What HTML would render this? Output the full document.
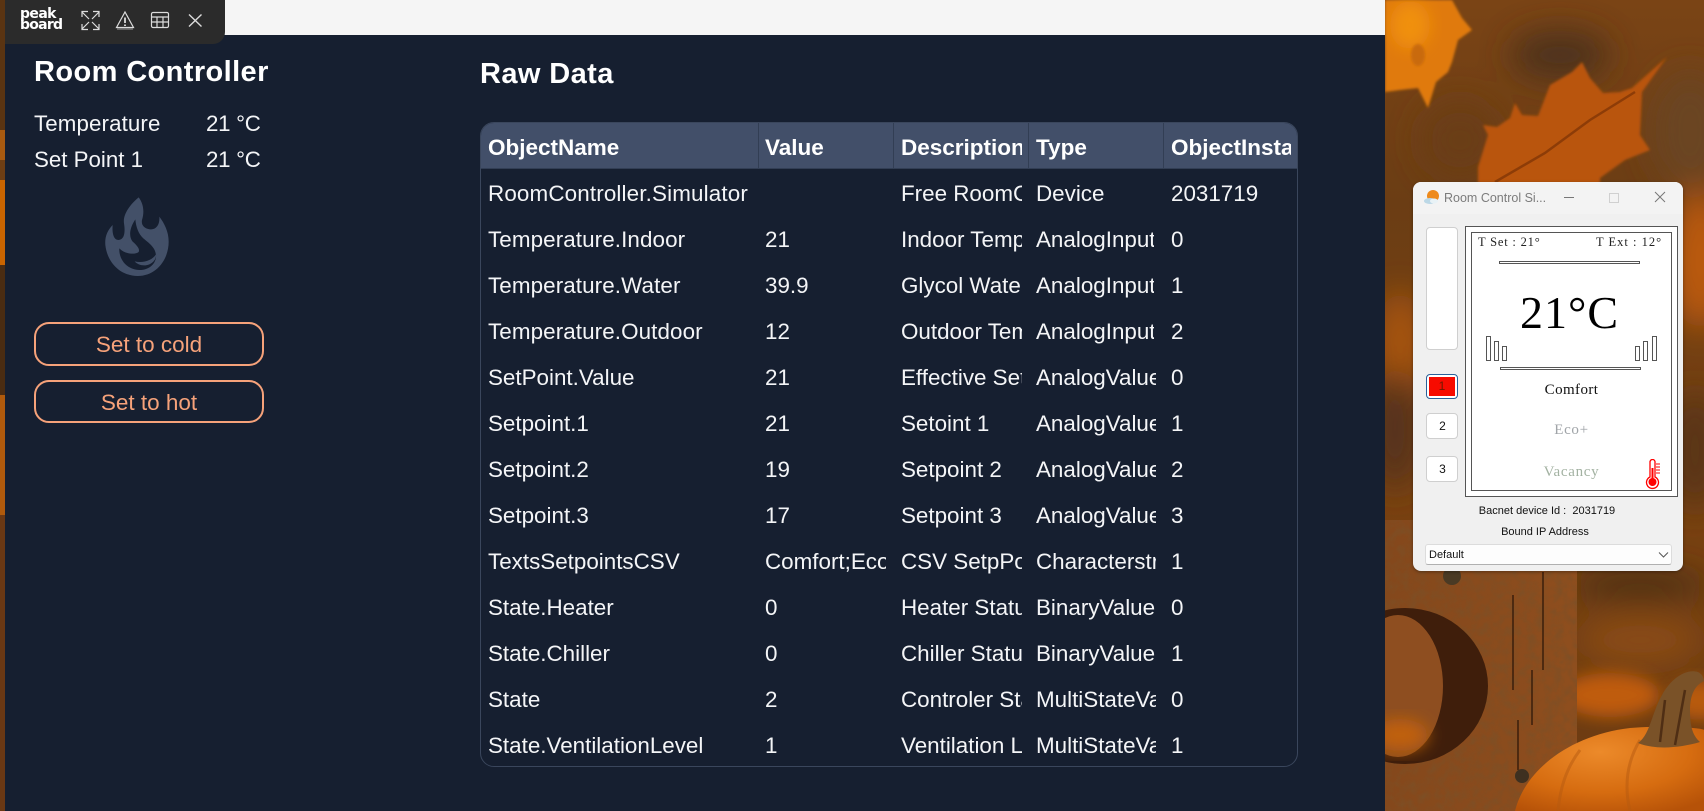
<!DOCTYPE html>
<html><head><meta charset="utf-8">
<style>
html,body{margin:0;padding:0;width:1704px;height:811px;overflow:hidden;background:#7a4312}
body{position:relative;font-family:"Liberation Sans",sans-serif}
.a{position:absolute;white-space:nowrap}
#app{position:absolute;left:5px;top:0;width:1380px;height:811px;background:#161f30;overflow:hidden}
#strip{position:absolute;left:0;top:0;width:1380px;height:35px;background:#f5f5f5}
#bar{position:absolute;left:0;top:0;width:220px;height:44px;background:#2b2b2b;border-radius:0 0 12px 0}
.t{color:#f4f5f7;position:absolute;white-space:nowrap;font-size:22.3px;line-height:30px}
.h1{color:#fff;position:absolute;white-space:nowrap;font-weight:bold;line-height:34px}
.btn{position:absolute;left:29px;width:226px;border:2px solid #f6a27a;border-radius:15px;color:#f6a27a;font-size:22.5px;text-align:center}
#tbl{position:absolute;left:475px;top:122px;width:818px;height:645px;border:1px solid #3a465c;border-radius:14px;overflow:hidden;box-sizing:border-box}
#head{position:absolute;left:0;top:0;width:100%;height:46px;background:#424f69;border-bottom:1px solid #323e54;box-sizing:border-box}
.d{position:absolute;top:0;width:1px;height:46px;background:#323e54}
.c{position:absolute;height:46px;line-height:46px;color:#f4f5f7;font-size:22.4px;white-space:nowrap;overflow:hidden}
.b{font-weight:bold;font-size:22.5px;color:#fff;line-height:50px}
.s{font-family:"Liberation Serif",serif;position:absolute;white-space:nowrap}
.w{font-family:"Liberation Sans",sans-serif;position:absolute;white-space:nowrap;color:#111}
.k{position:absolute;background:#fff;border:1px solid #cfcfcf;border-radius:4px;box-sizing:border-box;text-align:center;font-size:12px;color:#111}
.l{position:absolute;border:1px solid #555;box-sizing:border-box;background:#fff}
</style></head><body>

<svg class="a" style="left:0;top:0" width="1704" height="811" viewBox="0 0 1704 811">
<defs>
<filter id="b8" x="-30%" y="-30%" width="160%" height="160%"><feGaussianBlur stdDeviation="8"/></filter>
<filter id="b16" x="-40%" y="-40%" width="180%" height="180%"><feGaussianBlur stdDeviation="16"/></filter>
<filter id="b2"><feGaussianBlur stdDeviation="1.2"/></filter>
<filter id="wood" x="0" y="0" width="100%" height="100%">
<feTurbulence type="fractalNoise" baseFrequency="0.11" numOctaves="3" seed="4"/>
<feColorMatrix values="0 0 0 0 .2  0 0 0 0 .08  0 0 0 0 .02  2 0 0 0 -0.75"/>
</filter>
<linearGradient id="bgg" x1="0" y1="0" x2="0" y2="1">
<stop offset="0" stop-color="#7a4415"/><stop offset=".25" stop-color="#6b3d14"/><stop offset=".6" stop-color="#7a4210"/><stop offset="1" stop-color="#6a3a12"/></linearGradient>
<radialGradient id="pk" cx=".45" cy=".3" r=".8"><stop offset="0" stop-color="#ec8a2a"/><stop offset=".6" stop-color="#d66c10"/><stop offset="1" stop-color="#b65208"/></radialGradient>
<linearGradient id="wd" x1="0" y1="0" x2="1" y2="0"><stop offset="0" stop-color="#84481c"/><stop offset="1" stop-color="#8e4e1e"/></linearGradient>
</defs>
<rect width="1704" height="811" fill="url(#bgg)"/>
<rect x="0" y="0" width="5" height="130" fill="#5a3412"/><rect x="0" y="130" width="5" height="30" fill="#a85a10"/><rect x="0" y="180" width="5" height="85" fill="#c96400"/><rect x="0" y="265" width="5" height="130" fill="#4a2c12"/><rect x="0" y="395" width="5" height="120" fill="#b05a0c"/><rect x="0" y="515" width="5" height="296" fill="#6a3814"/>
<g filter="url(#b16)">
<ellipse cx="1560" cy="55" rx="50" ry="25" fill="#4e321a"/>
<ellipse cx="1690" cy="130" rx="40" ry="60" fill="#6b4520"/>
<ellipse cx="1460" cy="140" rx="40" ry="40" fill="#6a3c12"/>
<ellipse cx="1700" cy="260" rx="30" ry="70" fill="#bc5a10"/>
<ellipse cx="1400" cy="350" rx="25" ry="60" fill="#a85410"/>
<ellipse cx="1395" cy="430" rx="25" ry="60" fill="#54331a"/>
<ellipse cx="1695" cy="450" rx="30" ry="60" fill="#5a3618"/>
<ellipse cx="1640" cy="640" rx="60" ry="24" fill="#8a4b18"/>
<ellipse cx="1640" cy="585" rx="70" ry="14" fill="#4a2e16"/>
</g>
<ellipse cx="1610" cy="695" rx="50" ry="22" fill="#bf5c0c" filter="url(#b8)"/>
<ellipse cx="1700" cy="700" rx="30" ry="20" fill="#b85a0c" filter="url(#b8)"/>
<!-- top left leaf -->
<path d="M1385 0H1452L1462 18L1472 30L1458 40L1452 62L1448 72L1436 82L1428 108L1418 88L1400 90L1385 92Z" fill="#e07a0c" filter="url(#b2)"/>
<ellipse cx="1410" cy="25" rx="20" ry="24" fill="#f0900e" filter="url(#b8)"/>
<ellipse cx="1418" cy="55" rx="7" ry="11" fill="#c96a08" filter="url(#b2)"/>
<!-- main leaf -->
<path d="M1667 57L1652 78L1642 92L1640 135L1650 150L1625 160L1600 178L1600 200H1478L1478 167L1488 135L1483 125L1497 127L1510 118L1515 103L1522 115L1538 116L1550 85L1572 72L1582 62L1590 78L1603 93L1620 92L1632 88L1650 72Z" fill="#b9540a" filter="url(#b2)"/>
<path d="M1495 182L1545 153L1590 120L1635 92" stroke="#7a3206" stroke-width="2.5" fill="none" opacity=".7"/>
<!-- post -->
<rect x="1385" y="520" width="192" height="291" fill="url(#wd)"/>
<rect x="1385" y="520" width="192" height="291" filter="url(#wood)" opacity=".8"/>
<path d="M1513 595V690M1543 572V670M1532 670V725M1518 720L1518 770" stroke="#2c1608" stroke-width="1.8" fill="none" opacity=".7"/>
<circle cx="1452" cy="576" r="9" fill="#4a3a24"/><circle cx="1522" cy="776" r="7" fill="#3e3020"/>
<ellipse cx="1405" cy="686" rx="83" ry="78" fill="#3f1e0b"/>
<ellipse cx="1398" cy="686" rx="45" ry="71" fill="#8e4e20"/>
<ellipse cx="1400" cy="735" rx="28" ry="16" fill="#c0600e" filter="url(#b8)"/>
<!-- pumpkin -->
<path d="M1515 811C1525 770 1570 735 1630 728C1665 725 1704 728 1704 730V811Z" fill="url(#pk)"/>
<path d="M1640 740C1625 765 1625 790 1630 811M1580 750C1565 770 1560 790 1558 811" stroke="#b65a10" stroke-width="3" fill="none" opacity=".5"/>
<path d="M1638 743C1650 735 1652 712 1662 695C1670 680 1685 668 1698 672C1704 675 1704 681 1704 681C1695 685 1690 695 1690 710C1690 725 1692 735 1700 742C1680 748 1655 750 1638 743Z" fill="#7a5228"/>
<path d="M1665 700L1660 742M1685 690L1675 745" stroke="#4f2e14" stroke-width="2.500" fill="none"/>
</svg>

<div id="app">
<div id="strip"></div>

<div class="h1" style="left:29px;top:55px;font-size:29px;letter-spacing:.4px">Room Controller</div>
<div class="t" style="left:29px;top:109px;letter-spacing:.12px">Temperature</div>
<div class="t" style="left:201px;top:109px;letter-spacing:-.3px">21 °C</div>
<div class="t" style="left:29px;top:145px">Set Point 1</div>
<div class="t" style="left:201px;top:145px;letter-spacing:-.3px">21 °C</div>

<svg class="a" style="left:91px;top:190px" width="85" height="95" viewBox="0 0 255 285">
<path fill="#435068" fill-rule="evenodd" d="M128 22C100 45 80 75 84 100C88 125 86 148 68 150C52 150 48 128 50 105C34 122 26 140 28 165C34 220 75 258 125 258C180 258 218 210 218 155C218 125 205 100 190 80C192 105 180 120 162 118C145 116 135 105 138 90C146 65 142 40 128 22Z M118 88C100 115 98 140 110 155C125 168 132 178 128 186C118 194 88 194 70 175C68 210 95 240 130 240C165 240 182 215 180 195C178 172 160 160 142 145C128 132 120 112 118 88Z"/>
<path fill="#435068" d="M116 214C140 220 168 212 180 193C182 210 165 226 145 226C132 226 122 221 116 214Z"/>
</svg>

<div class="btn" style="top:322px;height:40px;line-height:42px">Set to cold</div>
<div class="btn" style="top:380px;height:39px;line-height:41px">Set to hot</div>

<div class="h1" style="left:475px;top:57px;font-size:29px;letter-spacing:.4px">Raw Data</div>

<div id="tbl">
<div id="head"></div>
<div class="d" style="left:277px"></div><div class="d" style="left:412px"></div><div class="d" style="left:547px"></div><div class="d" style="left:682px"></div>
<div class="c b" style="left:7px;top:0;width:262px">ObjectName</div><div class="c b" style="left:284px;top:0;width:120px">Value</div><div class="c b" style="left:420px;top:0;width:121px">Description</div><div class="c b" style="left:555px;top:0;width:120px">Type</div><div class="c b" style="left:690px;top:0;width:120px">ObjectInstance</div>

<div class="c" style="left:7px;top:48px;width:268px;letter-spacing:.15px">RoomController.Simulator</div><div class="c" style="left:284px;top:48px;width:121px"></div><div class="c" style="left:420px;top:48px;width:121px">Free RoomController</div><div class="c" style="left:555px;top:48px;width:120px">Device</div><div class="c" style="left:690px;top:48px;width:120px">2031719</div>
<div class="c" style="left:7px;top:94px;width:268px;letter-spacing:.1px">Temperature.Indoor</div><div class="c" style="left:284px;top:94px;width:121px">21</div><div class="c" style="left:420px;top:94px;width:121px">Indoor Temperature</div><div class="c" style="left:555px;top:94px;width:118px">AnalogInput</div><div class="c" style="left:690px;top:94px;width:120px">0</div>
<div class="c" style="left:7px;top:140px;width:268px;letter-spacing:.1px">Temperature.Water</div><div class="c" style="left:284px;top:140px;width:121px">39.9</div><div class="c" style="left:420px;top:140px;width:121px">Glycol Water</div><div class="c" style="left:555px;top:140px;width:118px">AnalogInput</div><div class="c" style="left:690px;top:140px;width:120px">1</div>
<div class="c" style="left:7px;top:186px;width:268px;letter-spacing:.1px">Temperature.Outdoor</div><div class="c" style="left:284px;top:186px;width:121px">12</div><div class="c" style="left:420px;top:186px;width:121px">Outdoor Temperature</div><div class="c" style="left:555px;top:186px;width:118px">AnalogInput</div><div class="c" style="left:690px;top:186px;width:120px">2</div>
<div class="c" style="left:7px;top:232px;width:268px">SetPoint.Value</div><div class="c" style="left:284px;top:232px;width:121px">21</div><div class="c" style="left:420px;top:232px;width:121px">Effective Setpoint</div><div class="c" style="left:555px;top:232px;width:120px">AnalogValue</div><div class="c" style="left:690px;top:232px;width:120px">0</div>
<div class="c" style="left:7px;top:278px;width:268px">Setpoint.1</div><div class="c" style="left:284px;top:278px;width:121px">21</div><div class="c" style="left:420px;top:278px;width:121px">Setoint 1</div><div class="c" style="left:555px;top:278px;width:120px">AnalogValue</div><div class="c" style="left:690px;top:278px;width:120px">1</div>
<div class="c" style="left:7px;top:324px;width:268px">Setpoint.2</div><div class="c" style="left:284px;top:324px;width:121px">19</div><div class="c" style="left:420px;top:324px;width:121px">Setpoint 2</div><div class="c" style="left:555px;top:324px;width:120px">AnalogValue</div><div class="c" style="left:690px;top:324px;width:120px">2</div>
<div class="c" style="left:7px;top:370px;width:268px">Setpoint.3</div><div class="c" style="left:284px;top:370px;width:121px">17</div><div class="c" style="left:420px;top:370px;width:121px">Setpoint 3</div><div class="c" style="left:555px;top:370px;width:120px">AnalogValue</div><div class="c" style="left:690px;top:370px;width:120px">3</div>
<div class="c" style="left:7px;top:416px;width:268px">TextsSetpointsCSV</div><div class="c" style="left:284px;top:416px;width:121px">Comfort;Eco+;Vacancy</div><div class="c" style="left:420px;top:416px;width:121px">CSV SetpPoints</div><div class="c" style="left:555px;top:416px;width:120px">Characterstring</div><div class="c" style="left:690px;top:416px;width:120px">1</div>
<div class="c" style="left:7px;top:462px;width:268px">State.Heater</div><div class="c" style="left:284px;top:462px;width:121px">0</div><div class="c" style="left:420px;top:462px;width:121px">Heater Status</div><div class="c" style="left:555px;top:462px;width:120px">BinaryValue</div><div class="c" style="left:690px;top:462px;width:120px">0</div>
<div class="c" style="left:7px;top:508px;width:268px">State.Chiller</div><div class="c" style="left:284px;top:508px;width:121px">0</div><div class="c" style="left:420px;top:508px;width:121px">Chiller Status</div><div class="c" style="left:555px;top:508px;width:120px">BinaryValue</div><div class="c" style="left:690px;top:508px;width:120px">1</div>
<div class="c" style="left:7px;top:554px;width:268px">State</div><div class="c" style="left:284px;top:554px;width:121px">2</div><div class="c" style="left:420px;top:554px;width:121px">Controler State</div><div class="c" style="left:555px;top:554px;width:120px">MultiStateValue</div><div class="c" style="left:690px;top:554px;width:120px">0</div>
<div class="c" style="left:7px;top:600px;width:268px">State.VentilationLevel</div><div class="c" style="left:284px;top:600px;width:121px">1</div><div class="c" style="left:420px;top:600px;width:121px">Ventilation Level</div><div class="c" style="left:555px;top:600px;width:120px">MultiStateValue</div><div class="c" style="left:690px;top:600px;width:120px">1</div>
</div>

<div id="bar">
<div class="a" style="left:15px;top:9px;color:#fff;font:bold 14px/11px 'DejaVu Sans',sans-serif;letter-spacing:-.6px">peak</div>
<div class="a" style="left:15px;top:20px;color:#fff;font:bold 14px/11px 'DejaVu Sans',sans-serif;letter-spacing:-.75px">board</div>
<svg class="a" style="left:0;top:0" width="220" height="44" viewBox="5 0 220 44" fill="none" stroke="#dcdcdc" stroke-width="1.2">
<path d="M82 17V11.500H88M99 17V11.500H93M82 24V29.500H88M99 24V29.500H93M82 12L89 19M99 12L92 19M82 29L89 22M99 29L92 22"/>
<path d="M125 12L133.500 27.500H116.500Z"/><path d="M125 17.500V23" stroke-width="1.8"/><path d="M125 24.500V26" stroke-width="1.8"/><path d="M117 29H133" stroke="#888"/>
<rect x="151.500" y="12.500" width="17" height="15" rx="1.500"/><path d="M151.500 17H168.500M151.500 22H168.500M157 17V27.500M163 17V27.500"/>
<path d="M189 14.500L201.500 26.500M201.500 14.500L189 26.500" stroke-width="1.4"/>
</svg>
</div>
</div>

<!-- simulator window -->
<div class="a" style="left:1413px;top:182px;width:270px;height:389px;background:#f0f0f0;border-radius:8px;overflow:hidden;box-shadow:0 1px 3px rgba(0,0,0,.35)">
<div style="position:absolute;left:0;top:0;width:270px;height:32px;background:#f3f3f3"></div>
</div>
<svg class="a" style="left:1422px;top:188px" width="20" height="18" viewBox="0 0 20 18">
<circle cx="11" cy="8" r="6" fill="#ee8a1c"/><ellipse cx="8" cy="13" rx="6" ry="3" fill="#bcd8e6"/><ellipse cx="12" cy="13" rx="4" ry="2.500" fill="#e8f2f6"/></svg>
<div class="w" style="left:1444px;top:190px;font-size:12.5px;line-height:16px;color:#7c7c7c">Room Control Si...</div>
<div class="a" style="left:1564px;top:197px;width:10px;height:1px;background:#777"></div>
<div class="a" style="left:1609px;top:193px;width:8px;height:8px;border:1px solid #d0d0d0"></div>
<svg class="a" style="left:1654px;top:191px" width="12" height="12" viewBox="0 0 12 12"><path d="M1 1L11 11M11 1L1 11" stroke="#777" stroke-width="1"/></svg>

<div class="k" style="left:1426px;top:227px;width:32px;height:123px"></div>
<div class="k" style="left:1426px;top:374px;width:32px;height:25px;border:1px solid #2a6099;padding:2px;background:#fff"><div style="width:100%;height:100%;background:#f70b00;line-height:19px;color:#6b1a00">1</div></div>
<div class="k" style="left:1426px;top:413px;width:32px;height:26px;line-height:25px;padding-left:1px">2</div>
<div class="k" style="left:1426px;top:456px;width:32px;height:26px;line-height:25px;padding-left:1px">3</div>

<div class="l" style="left:1465px;top:226px;width:213px;height:271px"></div>
<div class="l" style="left:1471px;top:232px;width:201px;height:259px"></div>
<div class="s" style="left:1478px;top:234px;font-size:12.5px;line-height:16px;color:#222;letter-spacing:.8px">T Set : 21°</div>
<div class="s" style="left:1596px;top:234px;font-size:12.5px;line-height:16px;color:#222;letter-spacing:1px">T Ext : 12°</div>
<div class="l" style="left:1499px;top:261px;width:141px;height:3px;background:#fff"></div>
<div class="s" style="left:1520px;top:288px;font-size:46px;line-height:50px;color:#000;letter-spacing:1px">21°C</div>
<div class="l" style="left:1486px;top:336px;width:5px;height:25px"></div><div class="l" style="left:1494px;top:341px;width:5px;height:20px"></div><div class="l" style="left:1502px;top:346px;width:5px;height:15px"></div>
<div class="l" style="left:1635px;top:346px;width:5px;height:15px"></div><div class="l" style="left:1643px;top:341px;width:5px;height:20px"></div><div class="l" style="left:1652px;top:336px;width:5px;height:25px"></div>
<div class="l" style="left:1500px;top:367px;width:141px;height:3px"></div>
<div class="s" style="left:1471px;width:201px;text-align:center;top:380.500px;font-size:15px;line-height:18px;color:#111;letter-spacing:.4px">Comfort</div>
<div class="s" style="left:1471px;width:201px;text-align:center;top:421px;font-size:15px;line-height:18px;color:#a0a4a8;letter-spacing:.7px">Eco+</div>
<div class="s" style="left:1471px;width:201px;text-align:center;top:463px;font-size:15px;line-height:18px;color:#a3b2a2;letter-spacing:.7px">Vacancy</div>
<svg class="a" style="left:1645px;top:459px" width="16" height="31" viewBox="0 0 16 31" fill="none">
<path d="M5 3A2.500 2.500 0 0 1 10 3V18A6 6 0 1 1 5 18Z" stroke="#f00" stroke-width="1.300"/><circle cx="7.500" cy="23" r="4" fill="#f00"/><rect x="6.500" y="9" width="2" height="12" fill="#f00"/>
<path d="M11 5H15M11 8H15M11 11H15M11 14H15" stroke="#f00"/></svg>
<div class="w" style="left:1413px;width:268px;text-align:center;top:503px;font-size:11px;line-height:16px">Bacnet device Id :&nbsp; 2031719</div>
<div class="w" style="left:1413px;width:264px;text-align:center;top:524px;font-size:11px;line-height:16px">Bound IP Address</div>
<div class="a" style="left:1425px;top:544px;width:247px;height:21px;background:#fdfdfd;border:1px solid #dcdcdc;border-bottom-color:#b0b0b0;border-radius:3px;box-sizing:border-box"></div>
<div class="w" style="left:1429px;top:547px;font-size:11px;line-height:16px">Default</div>
<svg class="a" style="left:1658px;top:551px" width="11" height="8" viewBox="0 0 11 8"><path d="M1 1.500L5.500 6L10 1.500" stroke="#555" fill="none"/></svg>
</body></html>
